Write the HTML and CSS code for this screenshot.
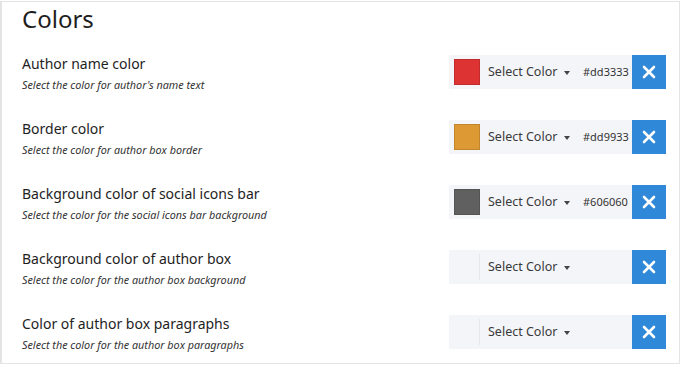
FILE: index.html
```html
<!DOCTYPE html>
<html lang="en">
  <head>
    <meta charset="UTF-8" />
    <title>Colors</title>
    <link rel="stylesheet" href="styles.css">
  </head>
  <body>
    <div class="panel">
      <h2>Colors</h2>
      <div class="row">
        <div class="info">
          <p class="label">Author name color</p>
          <p class="desc">Select the color for author's name text</p>
        </div>
        <div class="picker">
          <div class="field">
            <span class="swatch" style="background-color: #dd3333"></span>
            <span class="select">Select Color <span class="caret"></span></span>
            <span class="hex">#dd3333</span>
          </div>
          <button class="clear"><svg width="14" height="14" viewBox="0 0 14 14"><path d="M2 2L12 12M12 2L2 12" stroke="#fff" stroke-width="2.6" stroke-linecap="round"/></svg></button>
        </div>
      </div>
      <div class="row">
        <div class="info">
          <p class="label">Border color</p>
          <p class="desc">Select the color for author box border</p>
        </div>
        <div class="picker">
          <div class="field">
            <span class="swatch" style="background-color: #dd9933"></span>
            <span class="select">Select Color <span class="caret"></span></span>
            <span class="hex">#dd9933</span>
          </div>
          <button class="clear"><svg width="14" height="14" viewBox="0 0 14 14"><path d="M2 2L12 12M12 2L2 12" stroke="#fff" stroke-width="2.6" stroke-linecap="round"/></svg></button>
        </div>
      </div>
      <div class="row">
        <div class="info">
          <p class="label">Background color of social icons bar</p>
          <p class="desc">Select the color for the social icons bar background</p>
        </div>
        <div class="picker">
          <div class="field">
            <span class="swatch" style="background-color: #606060"></span>
            <span class="select">Select Color <span class="caret"></span></span>
            <span class="hex">#606060</span>
          </div>
          <button class="clear"><svg width="14" height="14" viewBox="0 0 14 14"><path d="M2 2L12 12M12 2L2 12" stroke="#fff" stroke-width="2.6" stroke-linecap="round"/></svg></button>
        </div>
      </div>
      <div class="row">
        <div class="info">
          <p class="label">Background color of author box</p>
          <p class="desc">Select the color for the author box background</p>
        </div>
        <div class="picker">
          <div class="field">
            <span class="swatch empty"></span>
            <span class="select">Select Color <span class="caret"></span></span>
          </div>
          <button class="clear"><svg width="14" height="14" viewBox="0 0 14 14"><path d="M2 2L12 12M12 2L2 12" stroke="#fff" stroke-width="2.6" stroke-linecap="round"/></svg></button>
        </div>
      </div>
      <div class="row">
        <div class="info">
          <p class="label">Color of author box paragraphs</p>
          <p class="desc">Select the color for the author box paragraphs</p>
        </div>
        <div class="picker">
          <div class="field">
            <span class="swatch empty"></span>
            <span class="select">Select Color <span class="caret"></span></span>
          </div>
          <button class="clear"><svg width="14" height="14" viewBox="0 0 14 14"><path d="M2 2L12 12M12 2L2 12" stroke="#fff" stroke-width="2.6" stroke-linecap="round"/></svg></button>
        </div>
      </div>
    </div>
  </body>
</html>
```

FILE: styles.css
```css
* {
  margin: 0;
  padding: 0;
  box-sizing: border-box;
}
body {
  background-color: #fff;
  font-family: "Noto Sans", sans-serif;
  color: #222;
}
.panel {
  margin-top: 1px;
  height: 363px;
  border: 1px solid #e4e4e4;
  border-left-width: 2px;
  padding: 0 13px 0 20px;
}
h2 {
  font-size: 24px;
  font-weight: 400;
  line-height: 34px;
  color: #1e1e1e;
  margin-bottom: 6px;
}
.row {
  display: flex;
  justify-content: space-between;
  align-items: center;
  height: 65px;
  padding-bottom: 6px;
}
.info {
  padding-top: 4px;
}
.label {
  font-size: 14px;
  line-height: 20px;
  color: #1e1e1e;
  margin-bottom: 3px;
}
.desc {
  font-size: 10.8px;
  font-style: italic;
  line-height: 16px;
  color: #333;
}
.picker {
  display: flex;
  height: 34px;
}
.field {
  display: flex;
  align-items: center;
  width: 183px;
  background-color: #f4f5f9;
  padding-left: 5px;
}
.swatch {
  width: 26px;
  height: 26px;
  border: 1px solid rgba(0, 0, 0, 0.12);
}
.swatch.empty {
  border: none;
  border-right: 1px solid #e6e7ec;
  background-color: #f4f5f9;
}
.select {
  font-size: 12.5px;
  color: #3a3a3a;
  margin-left: 8px;
  width: 95px;
  white-space: nowrap;
}
.caret {
  display: inline-block;
  margin-left: 3px;
  vertical-align: middle;
  border-left: 3.5px solid transparent;
  border-right: 3.5px solid transparent;
  border-top: 4px solid #444;
}
.hex {
  font-size: 11px;
  color: #333;
}
.clear {
  width: 34px;
  height: 34px;
  border: none;
  background-color: #2f88d8;
  display: flex;
  justify-content: center;
  align-items: center;
}
```
